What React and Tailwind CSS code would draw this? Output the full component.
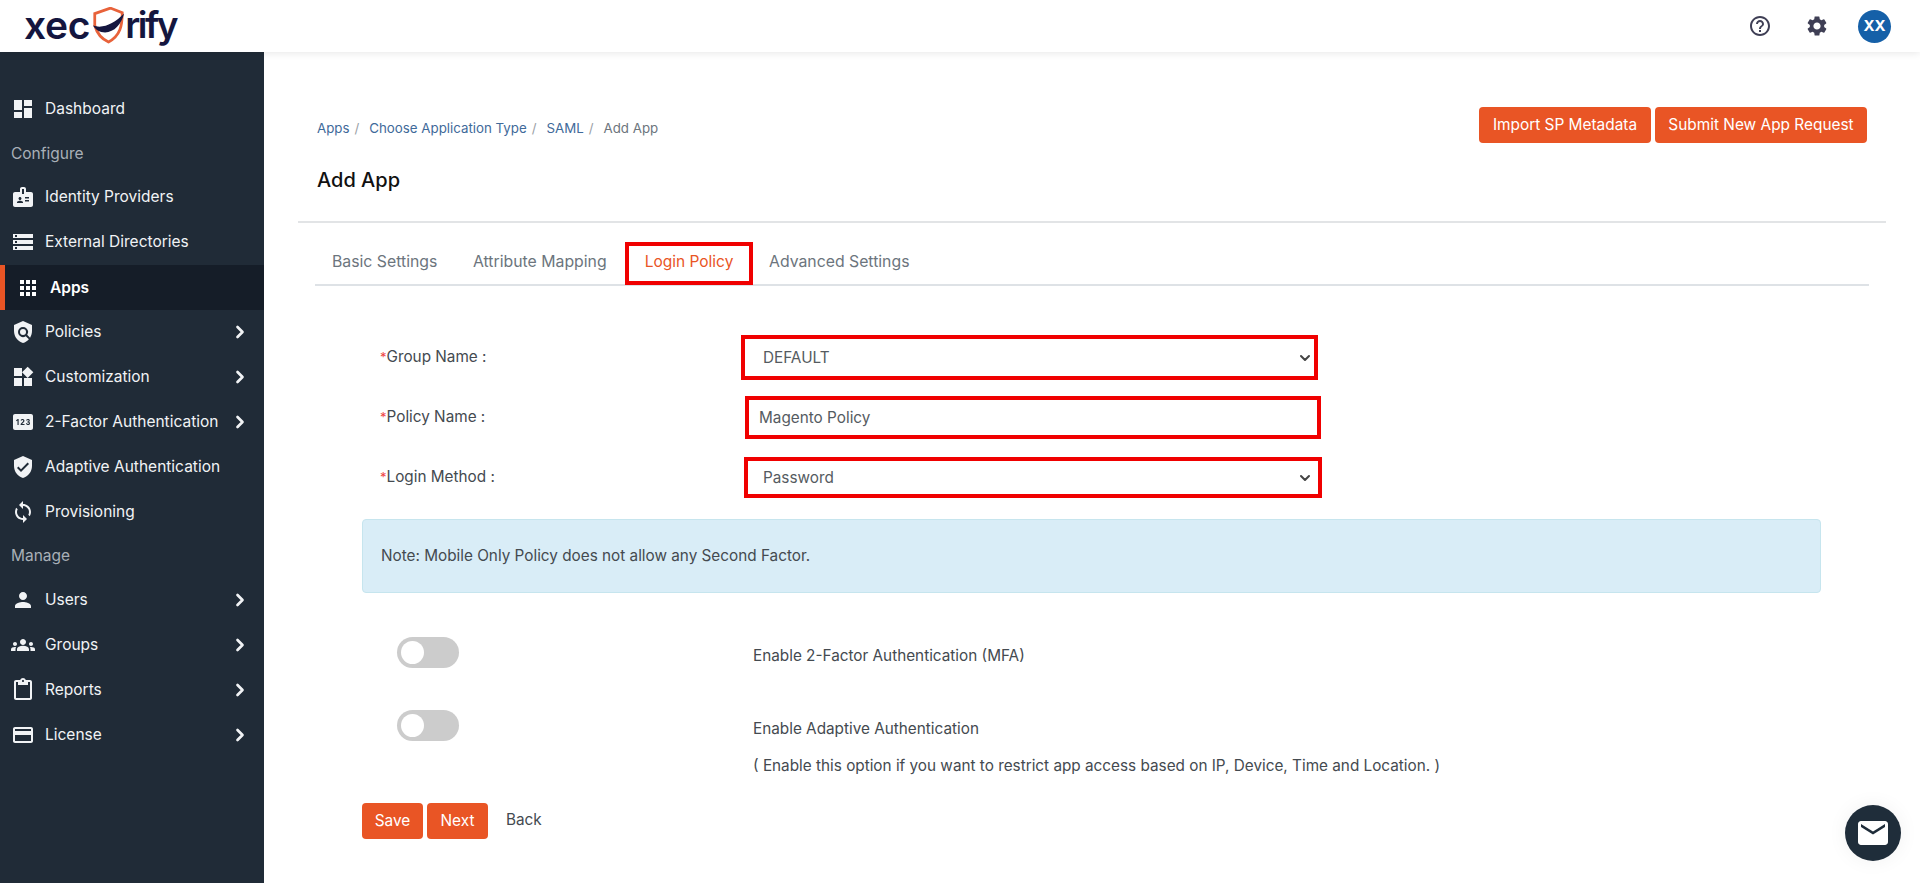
import {
  MdDashboard,
  MdBadge,
  MdStorage,
  MdApps,
  MdPolicy,
  MdWidgets,
  MdPin,
  MdVerifiedUser,
  MdSync,
  MdPerson,
  MdGroups,
  MdContentPaste,
  MdCreditCard,
  MdHelpOutline,
  MdSettings,
  MdEmail,
} from "react-icons/md";
import { ChevronRight, ChevronDown } from "lucide-react";

const navConfigure = [
  { label: "Identity Providers", icon: MdBadge },
  { label: "External Directories", icon: MdStorage },
  { label: "Apps", icon: MdApps, active: true },
  { label: "Policies", icon: MdPolicy, arrow: true },
  { label: "Customization", icon: MdWidgets, arrow: true },
  { label: "2-Factor Authentication", icon: MdPin, arrow: true },
  { label: "Adaptive Authentication", icon: MdVerifiedUser },
  { label: "Provisioning", icon: MdSync },
];
const navManage = [
  { label: "Users", icon: MdPerson, arrow: true },
  { label: "Groups", icon: MdGroups, arrow: true },
  { label: "Reports", icon: MdContentPaste, arrow: true },
  { label: "License", icon: MdCreditCard, arrow: true },
];

const NavItem = ({ item }) => {
  const Icon = item.icon;
  if (item.active) {
    return (
      <div className="h-[45px] flex items-center bg-[#151d28] border-l-[5px] border-[#e95525] pl-[11px] text-white font-semibold">
        <Icon className="w-[24px] h-[24px] shrink-0" />
        <span className="ml-[10px]">{item.label}</span>
      </div>
    );
  }
  return (
    <div className="h-[45px] pb-[2px] flex items-center pl-[11px] pr-[17px] text-[#f1f3f5]">
      <Icon className="w-[24px] h-[24px] shrink-0" />
      <span className="ml-[10px] flex-1 whitespace-nowrap">{item.label}</span>
      {item.arrow && (
        <ChevronRight strokeWidth={3.2} className="w-[20px] h-[20px] shrink-0 -mr-[3px]" />
      )}
    </div>
  );
};

const SectionLabel = ({ children, className }) => (
  <div className={`flex items-center pl-[11px] text-[#a9b0b7] ${className}`}>{children}</div>
);

const Sidebar = () => (
  <aside className="w-[264px] shrink-0 bg-[#202b37] pt-[35px] text-[15.5px]">
    <NavItem item={{ label: "Dashboard", icon: MdDashboard }} />
    <SectionLabel className="h-[43px]">Configure</SectionLabel>
    {navConfigure.map((item) => (
      <NavItem key={item.label} item={item} />
    ))}
    <SectionLabel className="h-[43px] pb-[2px]">Manage</SectionLabel>
    {navManage.map((item) => (
      <NavItem key={item.label} item={item} />
    ))}
  </aside>
);

const Logo = () => (
  <div className="flex items-center ml-[24px] -mt-[3px] text-[#14163f] text-[39px] font-semibold leading-none tracking-[-0.3px]">
    <span>xec</span>
    <svg viewBox="0 0 36 40" className="w-[33px] h-[37px] ml-[2px] mt-[2px]">
      <path
        d="M3 7 L20 1 L33 6 C33 20 31 31 18 38 C9 34 5 27 3 20 Z"
        fill="none"
        stroke="#e8623a"
        strokeWidth="3"
      />
      <path d="M1 20 C12 24 24 18 35 7 C32 20 22 30 10 27 C6 26 3 23 1 20 Z" fill="#14163f" />
    </svg>
    <span className="text-[37px] tracking-[-2.5px]">rify</span>
  </div>
);

const Header = () => (
  <header className="h-[52px] shrink-0 bg-white flex items-center justify-between pr-[29px] shadow-[0_1px_8px_rgba(0,0,0,0.1)] relative z-10">
    <Logo />
    <div className="flex items-center">
      <MdHelpOutline className="w-[24px] h-[24px] text-[#3f3f55]" />
      <MdSettings className="w-[24px] h-[24px] text-[#3f3f55] ml-[33px]" />
      <div className="w-[33px] h-[33px] ml-[29px] rounded-full bg-[#1560a8] text-white text-[15px] font-bold flex items-center justify-center">
        XX
      </div>
    </div>
  </header>
);

const OrangeButton = ({ children, className }) => (
  <button className={`h-[36px] rounded-[4px] bg-[#e95525] text-white text-[15.4px] ${className}`}>
    {children}
  </button>
);

const Breadcrumb = () => (
  <nav className="flex items-center text-[13.3px] mt-[12px]">
    <span className="text-[#3f6a9a]">Apps</span>
    <span className="text-[#9aa0a6] mx-[5px]">/</span>
    <span className="text-[#3f6a9a] ml-[5px]">Choose Application Type</span>
    <span className="text-[#9aa0a6] mx-[5px]">/</span>
    <span className="text-[#3f6a9a] ml-[5px]">SAML</span>
    <span className="text-[#9aa0a6] mx-[5px]">/</span>
    <span className="text-[#6c757d] ml-[5px]">Add App</span>
  </nav>
);

const Tabs = () => (
  <div className="mt-[20px] h-[43px] border-b-2 border-[#dee2e6] flex items-start text-[15.8px] text-[#6c757d]">
    <div className="h-[38px] flex items-center ml-[17px] w-[105px] whitespace-nowrap">Basic Settings</div>
    <div className="h-[38px] flex items-center ml-[36px] w-[136px] whitespace-nowrap">Attribute Mapping</div>
    <div className="h-[43px] -mt-[1px] ml-[16px] w-[128px] border-4 border-[#f00000] pb-[4px] text-[15.5px] flex items-center justify-center text-[#e95525] whitespace-nowrap">
      Login Policy
    </div>
    <div className="h-[38px] flex items-center ml-[16px] whitespace-nowrap">Advanced Settings</div>
  </div>
);

const Label = ({ children }) => (
  <div className="w-[360px] shrink-0 text-[15.3px] text-[#444a50] -ml-[1px] mr-[1px] -mt-[1px]">
    <span className="text-[#ef4444] text-[13px]">*</span>
    {children}
  </div>
);

const SelectBox = ({ value, className, textClass, arrowClass }) => (
  <div className={`relative border-4 border-[#f00000] ${className}`}>
    <select
      defaultValue={value}
      className={`w-full h-full appearance-none bg-white outline-none pt-[2px] text-[15.3px] text-[#555b61] ${textClass}`}
    >
      <option>{value}</option>
    </select>
    <ChevronDown
      strokeWidth={3}
      className={`absolute top-1/2 -translate-y-1/2 w-[16px] h-[16px] text-[#444] ${arrowClass}`}
    />
  </div>
);

const Toggle = () => (
  <div className="ml-[35px] w-[62px] h-[31px] rounded-full bg-[#cccccc] shrink-0 flex items-center pl-[4px]">
    <div className="w-[23px] h-[23px] rounded-full bg-white" />
  </div>
);

const Form = () => (
  <div className="ml-[47px] w-[1459px] pt-[49px]">
    <div className="flex items-center pl-[19px] h-[45px]">
      <Label>Group Name :</Label>
      <SelectBox
        value="DEFAULT"
        className="w-[577px] h-[45px]"
        textClass="pl-[18px]"
        arrowClass="right-[1px]"
      />
    </div>
    <div className="flex items-center pl-[19px] h-[43px] mt-[16px]">
      <Label>Policy Name :</Label>
      <input
        readOnly
        value="Magento Policy"
        className="ml-[4px] w-[576px] h-[43px] border-4 border-[#f00000] pl-[10px] outline-none text-[15.3px] text-[#555b61]"
      />
    </div>
    <div className="flex items-center pl-[19px] h-[41px] mt-[18px]">
      <Label>Login Method :</Label>
      <SelectBox
        value="Password"
        className="ml-[3px] w-[578px] h-[41px]"
        textClass="pl-[15px]"
        arrowClass="right-[5px]"
      />
    </div>
    <div className="mt-[21px] h-[74px] rounded-[4px] bg-[#d9edf7] border border-[#c6e5ee] flex items-center pl-[18px] text-[15.3px] text-[#444a50]">
      Note: Mobile Only Policy does not allow any Second Factor.
    </div>
    <div className="flex items-start mt-[44px] text-[15.3px] text-[#444a50]">
      <Toggle />
      <div className="ml-[294px] mt-[8px]">Enable 2-Factor Authentication (MFA)</div>
    </div>
    <div className="flex items-start mt-[42px] text-[15.3px] text-[#444a50]">
      <Toggle />
      <div className="ml-[294px] mt-[8px]">
        <div>Enable Adaptive Authentication</div>
        <div className="mt-[14px]">( Enable this option if you want to restrict app access based on IP, Device, Time and Location. )</div>
      </div>
    </div>
    <div className="flex items-center gap-[4px] mt-[25px]">
      <OrangeButton className="w-[61px]">Save</OrangeButton>
      <OrangeButton className="w-[61px]">Next</OrangeButton>
      <span className="ml-[14px] text-[15.3px] text-[#444a50]">Back</span>
    </div>
  </div>
);

export default function App() {
  return (
    <div className="h-[883px] flex flex-col overflow-hidden bg-white font-['Inter',sans-serif]">
      <Header />
      <div className="flex flex-1 min-h-0">
        <Sidebar />
        <main className="flex-1 px-[34px] pt-[55px]">
          <div className="pl-[19px] pr-[19px] flex items-start justify-between">
            <Breadcrumb />
            <div className="flex gap-[4px]">
              <OrangeButton className="w-[172px]">Import SP Metadata</OrangeButton>
              <OrangeButton className="w-[212px]">Submit New App Request</OrangeButton>
            </div>
          </div>
          <h1 className="px-[19px] mt-[23px] text-[20px] text-[#111] font-medium leading-[28px]">Add App</h1>
          <div className="mt-[27px] border-t-2 border-[#e2e4e6]" />
          <div className="mx-[17px]">
            <Tabs />
            <Form />
          </div>
        </main>
      </div>
      <button className="fixed right-[19px] bottom-[22px] w-[56px] h-[56px] rounded-full bg-[#1f2d3a] flex items-center justify-center z-20 shadow-[0_0_20px_rgba(0,0,0,0.06)]">
        <MdEmail className="w-[36px] h-[36px] text-white" />
      </button>
    </div>
  );
}
